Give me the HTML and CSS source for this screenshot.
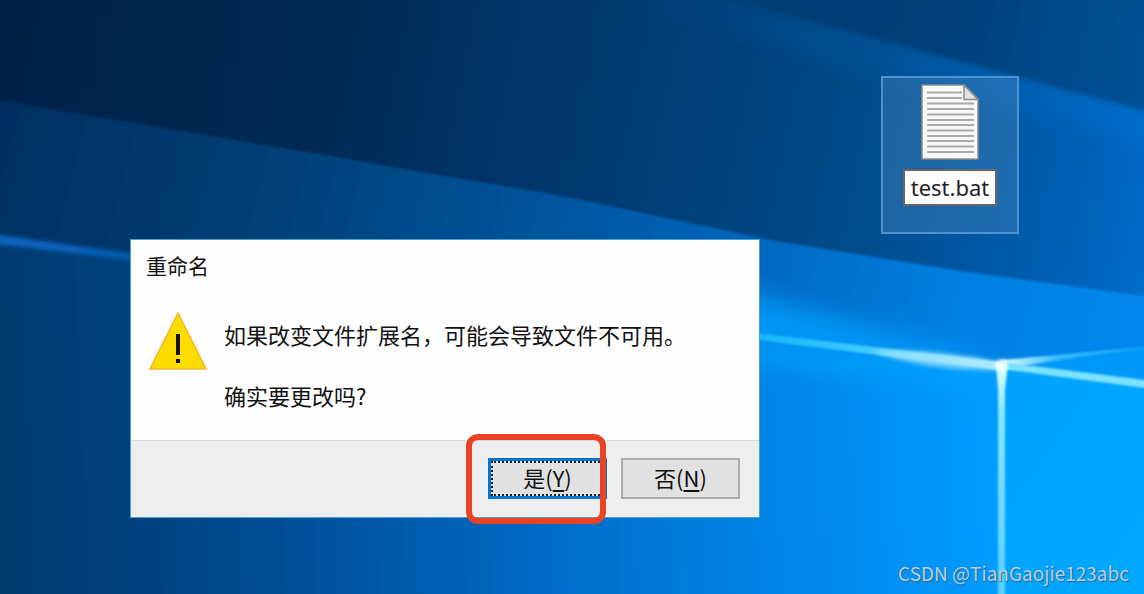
FILE: index.html
```html
<!DOCTYPE html>
<html lang="zh-CN">
<head>
  <meta charset="UTF-8" />
  <meta name="viewport" content="width=device-width, initial-scale=1.0"/>
  <title>重命名</title>
  <link rel="stylesheet" href="styles.css">
</head>
<body>
  <main class="desktop">
    <svg class="wallpaper" viewBox="0 0 1144 594" preserveAspectRatio="none" aria-hidden="true">
      <defs>
        <linearGradient id="top" gradientUnits="userSpaceOnUse" x1="0" y1="0" x2="1180" y2="240">
          <stop offset="0" stop-color="#002046"/>
          <stop offset=".28" stop-color="#002a54"/>
          <stop offset=".5" stop-color="#003a70"/>
          <stop offset=".72" stop-color="#004a88"/>
          <stop offset=".88" stop-color="#005cae"/>
          <stop offset="1" stop-color="#0070d0"/>
        </linearGradient>
        <linearGradient id="corner" gradientUnits="userSpaceOnUse" x1="700" y1="0" x2="1144" y2="100">
          <stop offset="0" stop-color="#003d74"/>
          <stop offset=".5" stop-color="#003f78"/>
          <stop offset="1" stop-color="#005096"/>
        </linearGradient>
        <linearGradient id="edge" gradientUnits="userSpaceOnUse" x1="700" y1="0" x2="1144" y2="110">
          <stop offset="0" stop-color="#0064b8" stop-opacity=".1"/>
          <stop offset="1" stop-color="#0070d0" stop-opacity=".7"/>
        </linearGradient>
        <linearGradient id="middle" gradientUnits="userSpaceOnUse" x1="0" y1="140" x2="1100" y2="420">
          <stop offset="0" stop-color="#002f60"/>
          <stop offset=".25" stop-color="#004078"/>
          <stop offset=".5" stop-color="#0056a0"/>
          <stop offset=".66" stop-color="#0066bc"/>
          <stop offset=".85" stop-color="#0080e2"/>
          <stop offset="1" stop-color="#0086ea"/>
        </linearGradient>
        <linearGradient id="bottom" gradientUnits="userSpaceOnUse" x1="0" y1="440" x2="1000" y2="400">
          <stop offset="0" stop-color="#003a70"/>
          <stop offset=".14" stop-color="#00427f"/>
          <stop offset=".36" stop-color="#0056a4"/>
          <stop offset=".58" stop-color="#0070ce"/>
          <stop offset=".78" stop-color="#0086e8"/>
          <stop offset="1" stop-color="#009dff"/>
        </linearGradient>
        <linearGradient id="pane" x1="0" y1="0" x2="1" y2="1">
          <stop offset="0" stop-color="#00a2fc"/>
          <stop offset="1" stop-color="#00aaff"/>
        </linearGradient>
        <linearGradient id="beam" gradientUnits="userSpaceOnUse" x1="0" y1="236" x2="1000" y2="366">
          <stop offset="0" stop-color="#0864bc"/>
          <stop offset=".14" stop-color="#0660b4"/>
          <stop offset=".75" stop-color="#10b4ff"/>
          <stop offset=".88" stop-color="#48ccff"/>
          <stop offset="1" stop-color="#c8f6ff"/>
        </linearGradient>
        <linearGradient id="post" gradientUnits="userSpaceOnUse" x1="0" y1="366" x2="0" y2="594">
          <stop offset="0" stop-color="#e0ffff"/>
          <stop offset=".2" stop-color="#86e6ff"/>
          <stop offset="1" stop-color="#58d0ff"/>
        </linearGradient>
        <linearGradient id="ray" gradientUnits="userSpaceOnUse" x1="1000" y1="0" x2="1144" y2="0">
          <stop offset="0" stop-color="#e8ffff"/>
          <stop offset=".4" stop-color="#38bcff"/>
          <stop offset="1" stop-color="#10a0fa"/>
        </linearGradient>
        <filter id="soft1" x="-10%" y="-10%" width="120%" height="120%"><feGaussianBlur stdDeviation="1"/></filter>
        <filter id="soft2" x="-10%" y="-30%" width="120%" height="160%"><feGaussianBlur stdDeviation="2"/></filter>
        <filter id="soft12" x="-30%" y="-60%" width="160%" height="220%"><feGaussianBlur stdDeviation="12"/></filter>
      </defs>
      <rect width="1144" height="594" fill="url(#top)"/>
      <path d="M660 -12 L1180 120 V150 L660 6Z" fill="url(#edge)" filter="url(#soft12)"/>
      <path d="M680 -14 L860 34 L1000 72 L1190 123 V-20Z" fill="url(#corner)" filter="url(#soft2)"/>
      <path d="M-20 97 L330 156 L572 198 L770 240 L960 271 L1190 302 V640 H-20Z" fill="url(#middle)" filter="url(#soft1)"/>
      <path d="M740 290 L1000 362 L740 350Z" fill="#00a0ff" opacity=".8" filter="url(#soft12)"/>
      <path d="M-20 233 L131 254 L760 336 L1002 366 L1190 388 V640 H-20Z" fill="url(#bottom)" filter="url(#soft1)"/>
      <path d="M720 336 L1000 370 L980 385 L720 360Z" fill="#00a6ff" opacity=".7" filter="url(#soft12)"/>
      <path d="M1002 364 L1190 342 V400 L1002 370Z" fill="#0098f8"/>
      <path d="M1002 366 L1190 391 V640 H1002Z" fill="url(#pane)"/>
      <path d="M-20 232 L140 255 V261 L-20 242Z" fill="url(#beam)" filter="url(#soft2)"/>
      <path d="M740 331 L1000 362 V370 L740 338Z" fill="url(#beam)" filter="url(#soft1)"/>
      <path d="M870 351 Q940 348 1000 362 V370 Q930 372 870 351Z" fill="#a4e6ff" opacity=".7" filter="url(#soft2)"/>
      <path d="M1000 360 Q1040 357 1160 345 V347 Q1060 358 1004 370Z" fill="url(#ray)" filter="url(#soft1)"/>
      <path d="M1002 362 L1160 382 V390 L1002 369Z" fill="#7ce2ff" filter="url(#soft1)"/>
      <path d="M996 363 H1008 L1005 390 V610 H998 V390Z" fill="url(#post)" filter="url(#soft1)"/>
      <circle cx="1001" cy="365" r="5" fill="#f4ffff" filter="url(#soft2)"/>
    </svg>

    <div class="file">
      <svg class="file-icon" width="58" height="76" viewBox="0 0 58 76" aria-hidden="true">
        <path d="M1 1 H43 L57 15 V75 H1Z" fill="#f8f8f8" stroke="#8c8c8c" stroke-width="1.5"/>
        <path d="M6 8.500H41 M6 14H41 M6 19.500H53 M6 25H53 M6 30.500H53 M6 36H53 M6 41H53 M6 46.500H53 M6 52H53 M6 57H53 M6 62.500H53 M6 68H53" stroke="#a9a9a9" stroke-width="1.800"/>
        <path d="M43 1 V15.500H57Z" fill="#e3e3e3" stroke="#8c8c8c" stroke-width="1.500"/>
      </svg>
      <input class="file-name" type="text" value="test.bat" aria-label="文件名" />
    </div>

    <section class="dialog" role="alertdialog" aria-labelledby="title" aria-describedby="message">
      <h1 class="dialog-title" id="title">重命名</h1>
      <div class="dialog-body">
        <svg class="warning" width="58" height="58" viewBox="0 0 58 58" aria-hidden="true">
          <path d="M29 1 L57 57 H1Z" fill="#fddc00" stroke="#f2b72c" stroke-width="1.5"/>
          <path d="M27 22H31V43H27Z M27 47H31V51H27Z" fill="#111"/>
        </svg>
        <div class="message" id="message">
          <p>如果改变文件扩展名&#xFF0C;可能会导致文件不可用。</p>
          <p>确实要更改吗?</p>
        </div>
      </div>
      <div class="dialog-footer">
        <div class="choice">
          <button class="btn btn-default" type="button" accesskey="y">是(<u>Y</u>)</button>
          <span class="marker"></span>
        </div>
        <button class="btn" type="button" accesskey="n">否(<u>N</u>)</button>
      </div>
    </section>

    <div class="watermark">CSDN @TianGaojie123abc</div>
  </main>
</body>
</html>
```
FILE: styles.css
```css
* { box-sizing: border-box; }
body { margin: 0; font-family: "Noto Sans CJK SC", sans-serif; font-size: 22px; color: #111; }
.desktop { position: relative; min-height: 100vh; overflow: hidden; background: #003f78; }
.wallpaper { position: absolute; inset: 0; width: 100%; height: 100%; }

/* desktop icon */
.file { position: absolute; left: 881px; top: 76px; display: flex; flex-direction: column; align-items: center; gap: 9px; padding: 6px 20px 26px; border: 2px solid #4d94cf; background: rgba(90, 145, 195, 0.32); }
.file-icon { display: block; }
.file-name { width: 94px; height: 37px; padding: 0 0 2px; border: 2px solid #666; background: #fdfdfd; color: #222; font-family: "Noto Sans", sans-serif; font-size: 22px; text-align: center; }

/* rename dialog */
.dialog { position: absolute; left: 130px; top: 239px; width: 630px; border: 1px solid #4aa3cf; background: #fdfdfd; }
.dialog-title { margin: 0; padding: 9px 15px 13px; font-size: 21px; font-weight: 400; line-height: 32px; }
.dialog-body { display: flex; gap: 17px; padding: 18px 18px 29px; }
.warning { flex: none; }
.message { padding-top: 6px; }
.message p { margin: 0 0 29px; line-height: 32px; white-space: nowrap; }
.message p:last-child { margin-bottom: 0; }
.dialog-footer { display: flex; justify-content: flex-end; gap: 14px; padding: 17px 19px 18px; border-top: 1px solid #dcdcdc; background: #eee; }
.choice { position: relative; }
.btn { display: block; width: 119px; height: 41px; padding: 0 0 4px; border: 2px solid #adadad; background: #e1e1e1; color: #111; font-family: inherit; font-size: 22px; line-height: 32px; text-underline-offset: 3px; }
.btn-default { border: 3px solid #0a74cc; outline: 2px dotted #222; outline-offset: -5px; }
.marker { position: absolute; left: -22px; top: -24px; width: 140px; height: 90px; border: 6px solid #eb4226; border-radius: 12px; pointer-events: none; }

.watermark { position: absolute; right: 15px; bottom: 7px; color: #b4cfe2; font-size: 19px; line-height: 28px; text-shadow: 1px 1px 1px #31668c; }
```
